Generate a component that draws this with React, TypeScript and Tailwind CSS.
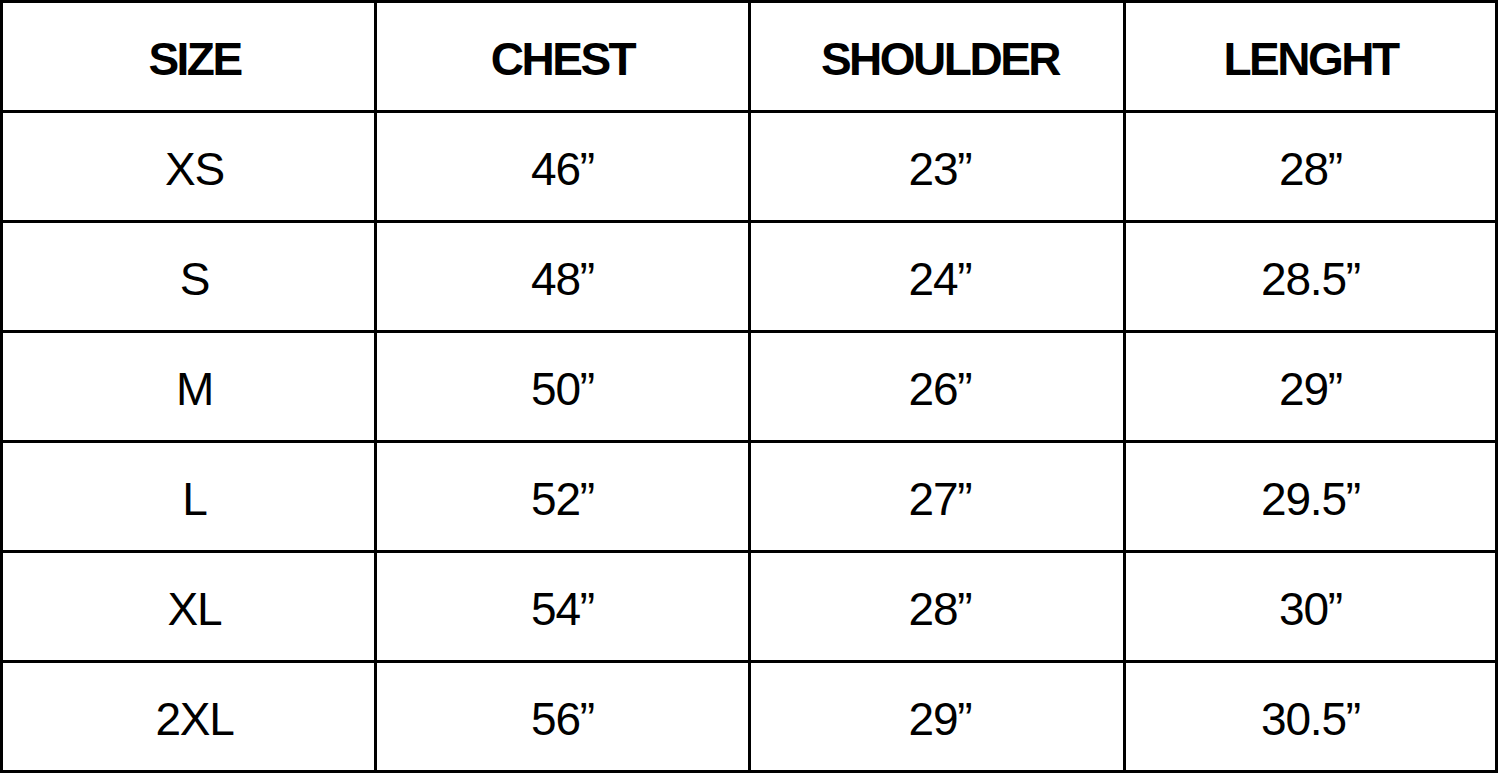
import React from 'react'

const headers = ['SIZE', 'CHEST', 'SHOULDER', 'LENGHT']

const rows: string[][] = [
  ['XS', '46”', '23”', '28”'],
  ['S', '48”', '24”', '28.5”'],
  ['M', '50”', '26”', '29”'],
  ['L', '52”', '27”', '29.5”'],
  ['XL', '54”', '28”', '30”'],
  ['2XL', '56”', '29”', '30.5”']
]

function Cell ({ children, head, col }: { children: React.ReactNode, head?: boolean, col: number }): React.ReactElement {
  return (
    <div
      className={`flex h-[110px] items-center justify-center border-b-[3px] border-black pt-[6px] text-[46px] text-black ${col === 3 ? '' : 'border-r-[3px]'} ${col === 0 ? 'pl-[12px]' : ''} ${col === 2 ? 'pl-[6px]' : ''} ${head ? 'font-bold tracking-[-2.5px]' : 'font-normal tracking-[-1.2px]'}`}
    >
      {children}
    </div>
  )
}

export default function App (): React.ReactElement {
  return (
    <div className="min-h-screen bg-white" style={{ fontFamily: '"Liberation Sans", Arial, sans-serif' }}>
      <div className="grid w-[1498px] grid-cols-[374px_374px_375px_1fr] border-l-[3px] border-r-[3px] border-t-[3px] border-black">
        {headers.map((h, i) => (
          <Cell key={h} head col={i}>{h}</Cell>
        ))}
        {rows.map((row) =>
          row.map((v, i) => (
            <Cell key={row[0] + i} col={i}>{v}</Cell>
          ))
        )}
      </div>
    </div>
  )
}
